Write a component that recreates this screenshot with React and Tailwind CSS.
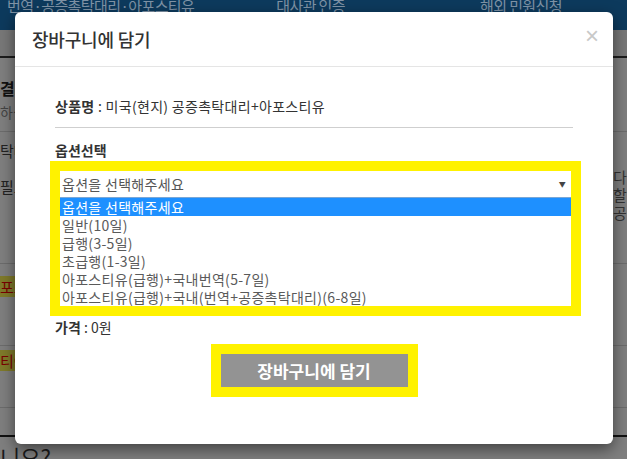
import React from "react";

const KR = { fontFamily: '"Noto Sans CJK KR", "Noto Sans", sans-serif' };

const options = [
  "옵션을 선택해주세요",
  "일반(10일)",
  "급행(3-5일)",
  "초급행(1-3일)",
  "아포스티유(급행)+국내번역(5-7일)",
  "아포스티유(급행)+국내(번역+공증촉탁대리)(6-8일)",
];

export default function App() {
  return (
    <div className="relative w-[627px] h-[459px] overflow-hidden bg-[#7f7f7f]" style={KR}>
      {/* background page (dimmed) */}
      <div className="flex flex-col">
        <div className="h-[30px] bg-[#0d3a5d] flex items-start text-[15px] leading-none tracking-[-0.6px] text-[#7f93a6]">
          <span className="ml-[7px] -mt-[2px]">번역·공증촉탁대리·아포스티유</span>
          <span className="ml-[82px] -mt-[2px]">대사관 인증</span>
          <span className="ml-[135px] -mt-[2px]">해외 민원신청</span>
        </div>
        <div className="h-[26px] bg-[#787878]" />
        <div className="h-[2px] bg-[#1c1c1c]" />
        <div className="h-[74px] border-b border-[#6c6c6c] flex flex-col pt-[20px] text-[16px] leading-[20px]">
          <span className="font-bold text-[#111]">결고</span>
          <span className="text-[14px] text-[#444] mt-[4px]">하실</span>
        </div>
        <div className="h-[132px] border-b border-[#6c6c6c] flex justify-between text-[15px] leading-[18px] text-[#222]">
          <div className="flex flex-col pt-[10px] gap-[18px]">
            <span>탁대</span>
            <span>필요</span>
          </div>
          <div className="flex flex-col pt-[36px] text-[#333] w-[14px] overflow-hidden whitespace-nowrap">
            <span>다.</span>
            <span>할</span>
            <span>공증</span>
          </div>
        </div>
        <div className="h-[82px] border-b border-[#6c6c6c] pt-[10px]">
          <span className="bg-[#7f7a2a] text-[#7a0000] text-[15px] leading-[18px]">포스</span>
        </div>
        <div className="h-[62px] border-b border-[#6c6c6c] pt-[2px]">
          <span className="bg-[#7f7a2a] text-[#7a0000] text-[15px] leading-[18px]">티아</span>
        </div>
        <div className="h-[27px]" />
        <div className="h-[2px] bg-[#111]" />
        <div className="text-[22px] leading-none text-[#1a1a1a] mt-[8px]">니요?</div>
      </div>

      {/* modal */}
      <div className="absolute left-[15px] top-[12px] w-[598px] h-[432px] bg-white rounded-[6px] shadow-[0_5px_15px_rgba(0,0,0,0.5)] flex flex-col">
        <div className="h-[55px] border-b border-[#e5e5e5] flex items-center justify-between pl-[17px] pr-[14px]">
          <h4 className="text-[18px] text-[#333] font-medium tracking-[-0.2px]">장바구니에 담기</h4>
          <span className="text-[24px] leading-none text-[#c8c8c8] -mt-[6px]" style={{ fontFamily: '"Liberation Sans", Arial, sans-serif' }}>×</span>
        </div>
        <div className="flex flex-col pl-[40px] pr-[40px] pt-[29px]">
          <div className="text-[14px] leading-[20px] text-[#333] pb-[11px] border-b border-[#cfcfcf] tracking-[0.3px]">
            <span className="font-bold">상품명</span> : 미국(현지) 공증촉탁대리+아포스티유
          </div>
          <div className="mt-[12px] text-[14px] font-bold text-[#333] leading-[20px]">옵션선택</div>
          <div className="mt-[1px] -ml-[5px] w-[531px] border-[10px] border-[#fff200] bg-white flex flex-col">
            <div className="h-[27px] flex items-center justify-between pl-[2px] pr-[5px] border-b border-[#7aa7d6] text-[14px] tracking-[0.3px] text-[#555]">
              <span>옵션을 선택해주세요</span>
              <span className="text-[7px] text-[#444]">▼</span>
            </div>
            <div className="flex flex-col">
              {options.map((o, i) => (
                <div
                  key={o}
                  className={
                    i === 0
                      ? "h-[18px] bg-[#1e90ff] text-white text-[14px] tracking-[0.3px] leading-[18px] pl-[2px]"
                      : "h-[18px] text-[#5a5a5a] text-[14px] tracking-[0.3px] leading-[18px] pl-[2px]"
                  }
                >
                  {o}
                </div>
              ))}
            </div>
          </div>
          <div className="mt-[1px] text-[14px] leading-[20px] text-[#333]">
            <span className="font-bold">가격</span> : 0원
          </div>
          <div className="mt-[7px] self-center border-[10px] border-[#fff200]">
            <button className="w-[187px] h-[33px] bg-[#939393] text-white text-[17px] font-bold">장바구니에 담기</button>
          </div>
        </div>
      </div>
    </div>
  );
}
